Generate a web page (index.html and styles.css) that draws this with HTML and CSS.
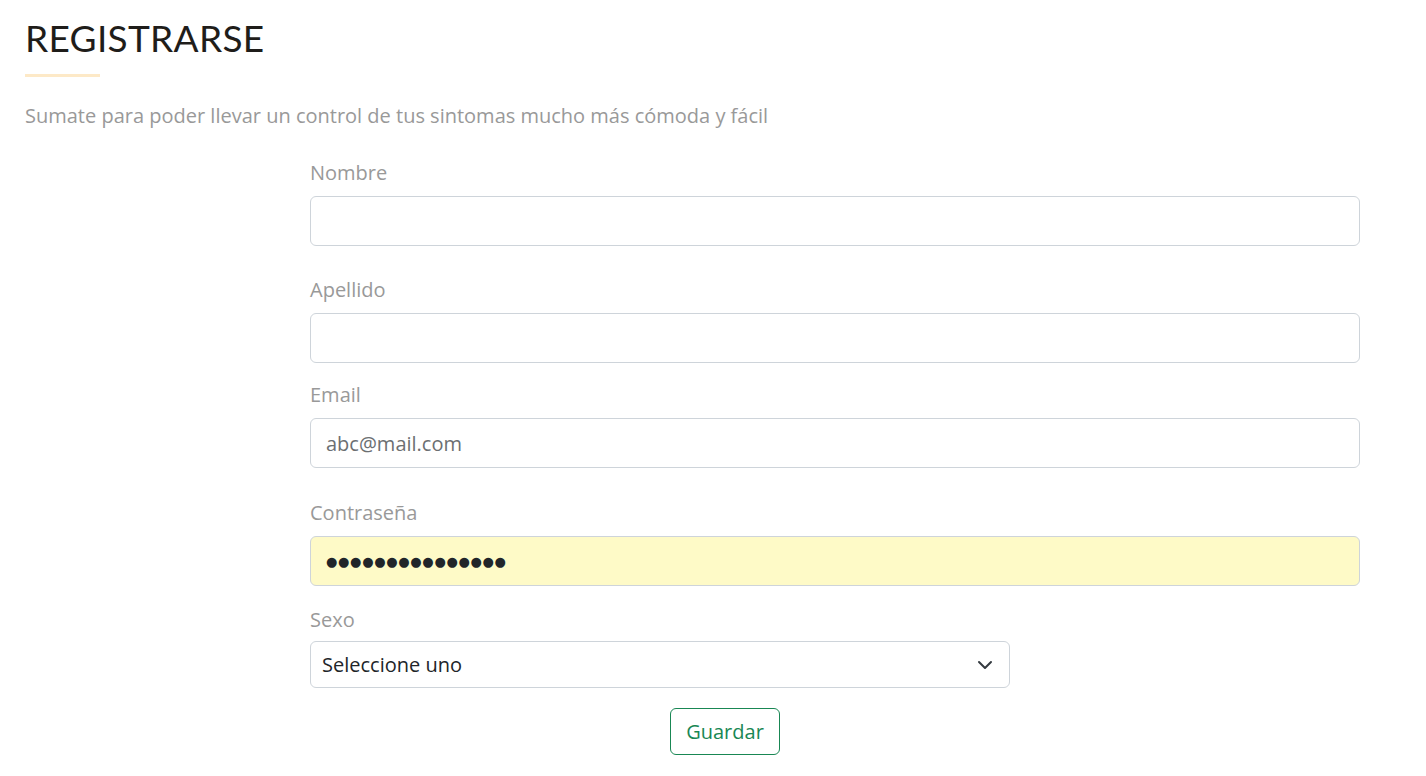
FILE: index.html
```html
<!DOCTYPE html>
<html lang="es">
<head>
<meta charset="utf-8">
<title>Registrarse</title>
<link rel="stylesheet" href="styles.css">
</head>
<body>
<main class="page">
  <header class="section-title">
    <h1 class="title">REGISTRARSE</h1>
    <div class="divider"></div>
    <p class="subtitle">Sumate para poder llevar un control de tus sintomas mucho más cómoda y fácil</p>
  </header>
  <form class="form">
    <div class="field gap-30">
      <label class="label" for="nombre">Nombre</label>
      <input class="control" id="nombre" type="text">
    </div>
    <div class="field gap-18">
      <label class="label" for="apellido">Apellido</label>
      <input class="control" id="apellido" type="text">
    </div>
    <div class="field gap-31">
      <label class="label" for="email">Email</label>
      <input class="control control-muted" id="email" type="email" value="abc@mail.com">
    </div>
    <div class="field gap-20">
      <label class="label" for="pass">Contraseña</label>
      <div class="control control-autofill"><span class="dots">●●●●●●●●●●●●●●●</span></div>
    </div>
    <div class="field field-select gap-20">
      <label class="label" for="sexo">Sexo</label>
      <div class="select" id="sexo">
        <span>Seleccione uno</span>
        <svg class="chev" width="16" height="16" viewBox="0 0 16 16"><path d="M2 5l6 6 6-6" fill="none" stroke="#343a40" stroke-width="2" stroke-linecap="round" stroke-linejoin="round"/></svg>
      </div>
    </div>
    <div class="actions">
      <button class="btn" type="button">Guardar</button>
    </div>
  </form>
</main>
</body>
</html>
```
FILE: styles.css
```css
html, body {
  margin: 0;
  padding: 0;
  background: #fff;
}
body {
  font-family: "Open Sans", "Liberation Sans", sans-serif;
  color: #212529;
}
.page {
  padding: 14px 25px 0 25px;
}
.title {
  font-family: "Lato", "Open Sans", sans-serif;
  font-weight: 400;
  font-size: 37px;
  line-height: 48px;
  margin: 0;
  color: #1f1d1a;
  letter-spacing: 0.3px;
}
.divider {
  width: 75px;
  height: 3px;
  background: #fde9c7;
  margin-top: 12px;
}
.subtitle {
  margin: 25px 0 0 0;
  font-size: 20px;
  line-height: 27px;
  color: #999;
}
.form {
  margin-left: 285px;
  width: 1050px;
  margin-top: 30px;
  display: flex;
  flex-direction: column;
}
.field {
  display: flex;
  flex-direction: column;
}
.gap-18 { margin-bottom: 18px; }
.gap-20 { margin-bottom: 20px; }
.gap-30 { margin-bottom: 30px; }
.gap-31 { margin-bottom: 31px; }
.label {
  font-size: 20px;
  line-height: 27px;
  color: #999;
  margin-bottom: 10px;
}
.control {
  box-sizing: border-box;
  height: 50px;
  width: 100%;
  border: 1px solid #ced4da;
  border-radius: 6px;
  padding: 0 15px;
  font-family: "Open Sans", sans-serif;
  font-size: 20px;
  color: #212529;
  background: #fff;
  outline: none;
  display: flex;
  align-items: center;
}
.control-muted {
  color: #6c6f72;
}
.control-autofill {
  background: #fefac7;
}
.dots {
  font-family: "DejaVu Sans", sans-serif;
  font-size: 13px;
  letter-spacing: 0.7px;
  color: #212529;
}
.field-select .label {
  margin-bottom: 8px;
}
.select {
  box-sizing: border-box;
  width: 700px;
  height: 47px;
  border: 1px solid #ced4da;
  border-radius: 6px;
  padding: 0 16px 0 11px;
  display: flex;
  align-items: center;
  justify-content: space-between;
  font-size: 20px;
  color: #212529;
}
.chev {
  width: 16px;
  height: 16px;
}
.actions {
  display: flex;
  padding-left: 360px;
}
.btn {
  box-sizing: border-box;
  width: 110px;
  height: 47px;
  border: 1px solid #198754;
  border-radius: 6px;
  background: #fff;
  color: #198754;
  font-family: "Open Sans", sans-serif;
  font-size: 20px;
  padding: 0;
  cursor: pointer;
}
```
